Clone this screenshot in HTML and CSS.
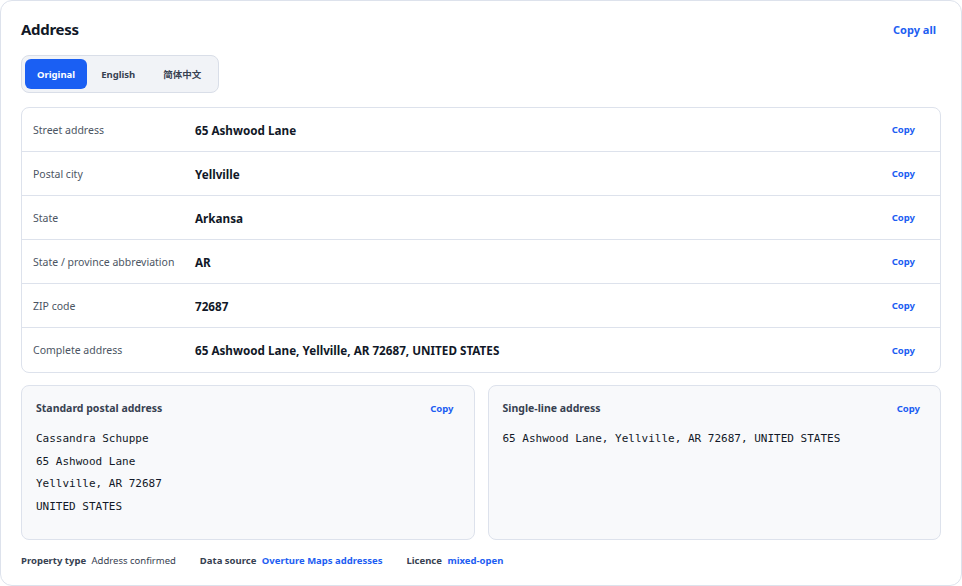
FILE: index.html
```html
<!DOCTYPE html>
<html lang="en">
<head>
  <meta charset="UTF-8">
  <meta name="viewport" content="width=device-width, initial-scale=1.0">
  <title>Address</title>
  <link rel="stylesheet" href="styles.css">
</head>
<body>
  <div class="cartao">
    <div class="topo">
      <h1>Address</h1>
      <button class="link copiar-tudo">Copy all</button>
    </div>

    <div class="abas">
      <button class="aba ativa">Original</button>
      <button class="aba">English</button>
      <button class="aba">简体中文</button>
    </div>

    <div class="campos">
      <div class="linha">
        <span class="rotulo">Street address</span>
        <span class="valor">65 Ashwood Lane</span>
        <button class="link">Copy</button>
      </div>
      <div class="linha">
        <span class="rotulo">Postal city</span>
        <span class="valor">Yellville</span>
        <button class="link">Copy</button>
      </div>
      <div class="linha">
        <span class="rotulo">State</span>
        <span class="valor">Arkansa</span>
        <button class="link">Copy</button>
      </div>
      <div class="linha">
        <span class="rotulo">State / province abbreviation</span>
        <span class="valor">AR</span>
        <button class="link">Copy</button>
      </div>
      <div class="linha">
        <span class="rotulo">ZIP code</span>
        <span class="valor">72687</span>
        <button class="link">Copy</button>
      </div>
      <div class="linha">
        <span class="rotulo">Complete address</span>
        <span class="valor">65 Ashwood Lane, Yellville, AR 72687, UNITED STATES</span>
        <button class="link">Copy</button>
      </div>
    </div>

    <div class="blocos">
      <div class="bloco">
        <div class="bloco-topo">
          <span class="bloco-titulo">Standard postal address</span>
          <button class="link">Copy</button>
        </div>
        <div class="mono">
          <div>Cassandra Schuppe</div>
          <div>65 Ashwood Lane</div>
          <div>Yellville, AR 72687</div>
          <div>UNITED STATES</div>
        </div>
      </div>
      <div class="bloco">
        <div class="bloco-topo">
          <span class="bloco-titulo">Single-line address</span>
          <button class="link">Copy</button>
        </div>
        <div class="mono">
          <div>65 Ashwood Lane, Yellville, AR 72687, UNITED STATES</div>
        </div>
      </div>
    </div>

    <div class="rodape">
      <span class="item"><b>Property type</b> Address confirmed</span>
      <span class="item"><b>Data source</b> <a href="#">Overture Maps addresses</a></span>
      <span class="item"><b>Licence</b> <a href="#">mixed-open</a></span>
    </div>
  </div>
</body>
</html>
```

FILE: styles.css
```css
body {
  margin: 0;
  font-family: "Noto Sans", "Noto Sans CJK SC", sans-serif;
  color: #111827;
  background: #fff;
}
.cartao {
  box-sizing: border-box;
  width: 962px;
  height: 586px;
  border: 1px solid #dde2ec;
  border-radius: 12px;
  padding: 18px 20px 0 20px;
  background: #fff;
}
.topo {
  display: flex;
  justify-content: space-between;
  align-items: center;
  height: 20px;
}
h1 {
  margin: 0;
  font-size: 15px;
  font-weight: 700;
  letter-spacing: -0.3px;
}
button {
  font-family: inherit;
  border: none;
  background: none;
  padding: 0;
  cursor: pointer;
}
.link {
  color: #1d5ef2;
  font-weight: 700;
  font-size: 9.5px;
}
.copiar-tudo {
  font-size: 11px;
  margin-right: 5px;
}
.abas {
  display: inline-flex;
  margin-top: 16px;
  padding: 3px;
  background: #f1f3f7;
  border: 1px solid #d9dee8;
  border-radius: 8px;
}
.aba {
  height: 30px;
  padding: 0 12px;
  font-size: 9.5px;
  font-weight: 700;
  color: #374151;
  border-radius: 6px;
}
.aba + .aba {
  padding: 0 14px;
}
.aba.ativa {
  background: #1a5ff3;
  color: #fff;
}
.campos {
  margin-top: 14px;
  border: 1px solid #dde2ec;
  border-radius: 8px;
}
.linha {
  display: flex;
  align-items: center;
  height: 43px;
  padding: 0 25px 0 11px;
  border-top: 1px solid #dde2ec;
}
.linha:first-child {
  border-top: none;
}
.linha:last-child {
  height: 44px;
}
.rotulo {
  width: 162px;
  font-size: 10.5px;
  color: #4b5563;
}
.valor {
  flex: 1;
  font-size: 11.7px;
  font-weight: 700;
  color: #111827;
}
.blocos {
  display: flex;
  gap: 13px;
  margin-top: 12px;
}
.bloco {
  flex: 1;
  height: 155px;
  box-sizing: border-box;
  background: #f8f9fb;
  border: 1px solid #dde2ec;
  border-radius: 8px;
  padding: 15px 20px 0 14px;
}
.bloco-topo {
  display: flex;
  justify-content: space-between;
  align-items: center;
}
.bloco-titulo {
  font-size: 10.5px;
  font-weight: 700;
  color: #374151;
}
.mono {
  margin-top: 13px;
  font-family: "DejaVu Sans Mono", "Liberation Mono", monospace;
  font-size: 11px;
  line-height: 22.6px;
  color: #111827;
}
.rodape {
  display: flex;
  gap: 24px;
  margin-top: 14px;
  font-size: 9.5px;
  color: #374151;
}
.rodape b {
  margin-right: 3px;
  color: #374151;
}
.rodape a {
  color: #1d5ef2;
  font-weight: 700;
  text-decoration: none;
}
```
